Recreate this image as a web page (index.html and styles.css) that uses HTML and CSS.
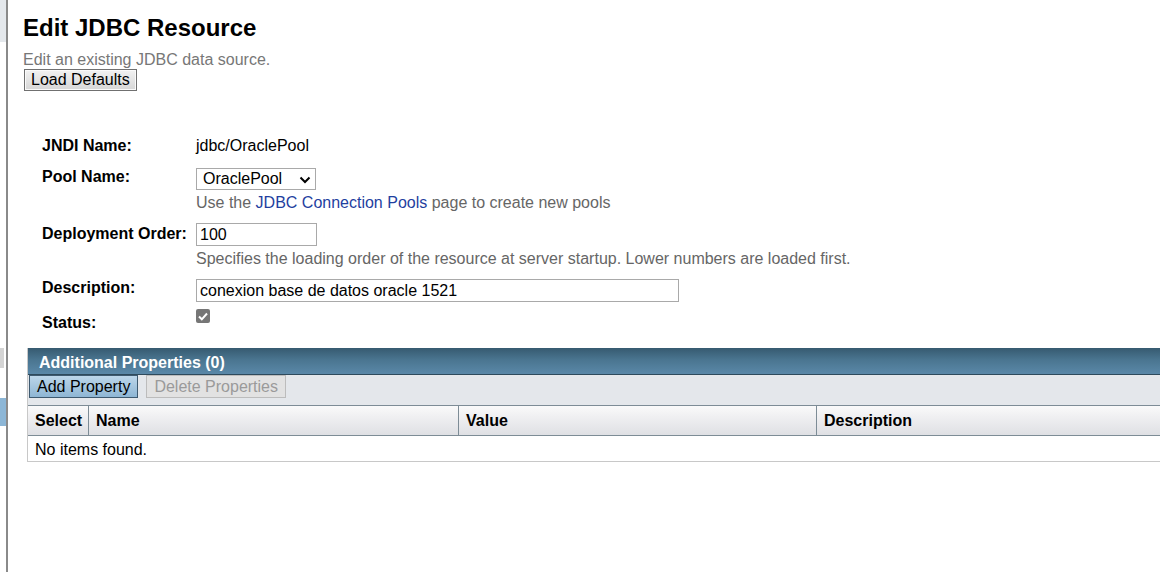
FILE: index.html
```html
<!DOCTYPE html>
<html>
<head>
<meta charset="utf-8">
<title>Edit JDBC Resource</title>
<link rel="stylesheet" href="styles.css">
</head>
<body>
<div class="frame">
  <div class="nav">
    <div class="nav-top"></div>
    <div class="nav-grip"></div>
    <div class="nav-sel"></div>
  </div>
  <div class="main">
    <h1 class="title">Edit JDBC Resource</h1>
    <p class="subtitle">Edit an existing JDBC data source.</p>
    <button class="btn">Load Defaults</button>

    <div class="form">
      <div class="row r1">
        <div class="label">JNDI Name:</div>
        <div class="value"><span class="text">jdbc/OraclePool</span></div>
      </div>
      <div class="row r2">
        <div class="label">Pool Name:</div>
        <div class="value">
          <div class="select-wrap">
            <select class="select"><option>OraclePool</option></select>
            <svg class="chev" width="12" height="8" viewBox="0 0 12 8"><path d="M1.5 1.5 L6 6 L10.5 1.5" fill="none" stroke="#000" stroke-width="2"/></svg>
          </div>
          <div class="help">Use the <a class="link" href="#">JDBC Connection Pools</a> page to create new pools</div>
        </div>
      </div>
      <div class="row r3">
        <div class="label">Deployment Order:</div>
        <div class="value">
          <input class="input short" type="text" value="100">
          <div class="help">Specifies the loading order of the resource at server startup. Lower numbers are loaded first.</div>
        </div>
      </div>
      <div class="row r4">
        <div class="label">Description:</div>
        <div class="value"><input class="input long" type="text" value="conexion base de datos oracle 1521"></div>
      </div>
      <div class="row r5">
        <div class="label status-label">Status:</div>
        <div class="value">
          <span class="check"><svg width="10" height="9" viewBox="0 0 10 9"><path d="M1 4.5 L3.8 7.3 L9 1.5" fill="none" stroke="#fff" stroke-width="2"/></svg></span>
        </div>
      </div>
    </div>

    <div class="props">
      <div class="props-title">Additional Properties (0)</div>
      <div class="props-bar">
        <button class="pbtn add">Add Property</button>
        <button class="pbtn del" disabled>Delete Properties</button>
      </div>
      <div class="props-head">
        <div class="th c-sel">Select</div>
        <div class="th c-name">Name</div>
        <div class="th c-val">Value</div>
        <div class="th c-desc">Description</div>
      </div>
      <div class="props-empty">No items found.</div>
    </div>
  </div>
</div>
</body>
</html>
```

FILE: styles.css
```css
html, body {
  margin: 0;
  padding: 0;
  background: #fff;
  overflow: hidden;
}
body {
  font-family: "Liberation Sans", Arial, sans-serif;
  font-size: 16px;
  color: #000;
  width: 1160px;
  height: 572px;
}
.frame {
  display: flex;
  height: 572px;
}
.nav {
  width: 6px;
  flex: none;
  border-right: 2px solid #8a8a8a;
  display: flex;
  flex-direction: column;
}
.nav-top {
  height: 42px;
  background: #e4e8ec;
}
.nav-grip {
  margin-top: 306px;
  height: 20px;
  width: 4px;
  background: #d4d4d4;
}
.nav-sel {
  margin-top: 30px;
  height: 28px;
  background: #8cb6d6;
}
.main {
  flex: 1;
  min-width: 0;
  padding-left: 15px;
}
.title {
  margin: 14px 0 0 0;
  font-size: 24px;
  font-weight: bold;
  line-height: 28px;
}
.subtitle {
  margin: 9px 0 0 0;
  color: #777;
  font-size: 16px;
  line-height: 18px;
}
.btn {
  margin: 0 0 0 1px;
  font-family: inherit;
  font-size: 16px;
  height: 22px;
  padding: 0 6px;
  line-height: 18px;
  border: 1px solid #707070;
  background: linear-gradient(#f2f2f2, #d6d6d6);
  color: #000;
  border-radius: 0;
  box-shadow: inset 0 0 0 1px #fafafa;
}
.form {
  margin-top: 45px;
  padding-left: 19px;
  display: flex;
  flex-direction: column;
}
.row {
  display: flex;
}
.label {
  width: 154px;
  flex: none;
  font-weight: bold;
  line-height: 18px;
}
.value {
  display: flex;
  flex-direction: column;
  align-items: flex-start;
}
.text {
  line-height: 18px;
}
.r1 { margin-top: 1px; }
.r2 { margin-top: 13px; }
.r3 { margin-top: 11px; }
.r3 .label { padding-top: 2px; }
.r4 { margin-top: 11px; }
.r5 { margin-top: 7px; }
.status-label { padding-top: 5px; }
.select-wrap {
  position: relative;
  width: 120px;
  height: 22px;
}
.select {
  -webkit-appearance: none;
  appearance: none;
  width: 120px;
  height: 22px;
  font-family: inherit;
  font-size: 16px;
  padding: 0 0 0 6px;
  border: 1px solid #a9a9a9;
  background: #fff;
  color: #000;
  border-radius: 0;
  line-height: 20px;
}
.chev {
  position: absolute;
  right: 5px;
  top: 8px;
}
.help {
  color: #666;
  line-height: 18px;
  margin-top: 4px;
}
.link {
  color: #1f3fa0;
  text-decoration: none;
}
.input {
  font-family: inherit;
  font-size: 16px;
  height: 23px;
  box-sizing: border-box;
  border: 1px solid #a9a9a9;
  padding: 1px 3px;
  margin: 0;
  color: #000;
  background: #fff;
  border-radius: 0;
}
.short { width: 121px; }
.long { width: 483px; }
.check {
  width: 14px;
  height: 14px;
  border-radius: 2px;
  background: #767676;
  display: flex;
  align-items: center;
  justify-content: center;
}
.props {
  margin-top: 16px;
  margin-left: 4px;
  width: 1160px;
  border-left: 1px solid #c8c8c8;
}
.props-title {
  height: 26px;
  background: linear-gradient(#365a70, #4a7590 45%, #5a88a8);
  border-bottom: 1px solid #2e4a5c;
  color: #fff;
  font-weight: bold;
  line-height: 29px;
  padding-left: 11px;
}
.props-bar {
  background: #e4e7eb;
  height: 30px;
  display: flex;
  align-items: flex-start;
  gap: 8px;
  padding-left: 1px;
}
.pbtn {
  font-family: inherit;
  font-size: 16px;
  height: 23px;
  padding: 0 7px;
  line-height: 20px;
  border-radius: 0;
  margin: 0;
}
.add {
  background: linear-gradient(#bcd6ea, #8eb6d4);
  border: 1px solid #3e5a70;
  color: #000;
}
.del {
  background: #e2e2e2;
  border: 1px solid #bcbcbc;
  color: #9a9a9a;
}
.props-head {
  display: flex;
  height: 29px;
  border-top: 1px solid #7d8c96;
  border-bottom: 1px solid #7d8c96;
  background: linear-gradient(#fafafa, #f0f0f2 35%, #dfe0e4);
}
.th {
  font-weight: bold;
  line-height: 30px;
  padding-left: 7px;
  box-sizing: border-box;
  border-left: 1px solid #7d8c96;
}
.c-sel { width: 60px; border-left: none; }
.c-name { width: 370px; }
.c-val { width: 358px; }
.c-desc { flex: 1; }
.props-empty {
  height: 25px;
  line-height: 28px;
  padding-left: 7px;
  border-bottom: 1px solid #c8c8c8;
}
```
